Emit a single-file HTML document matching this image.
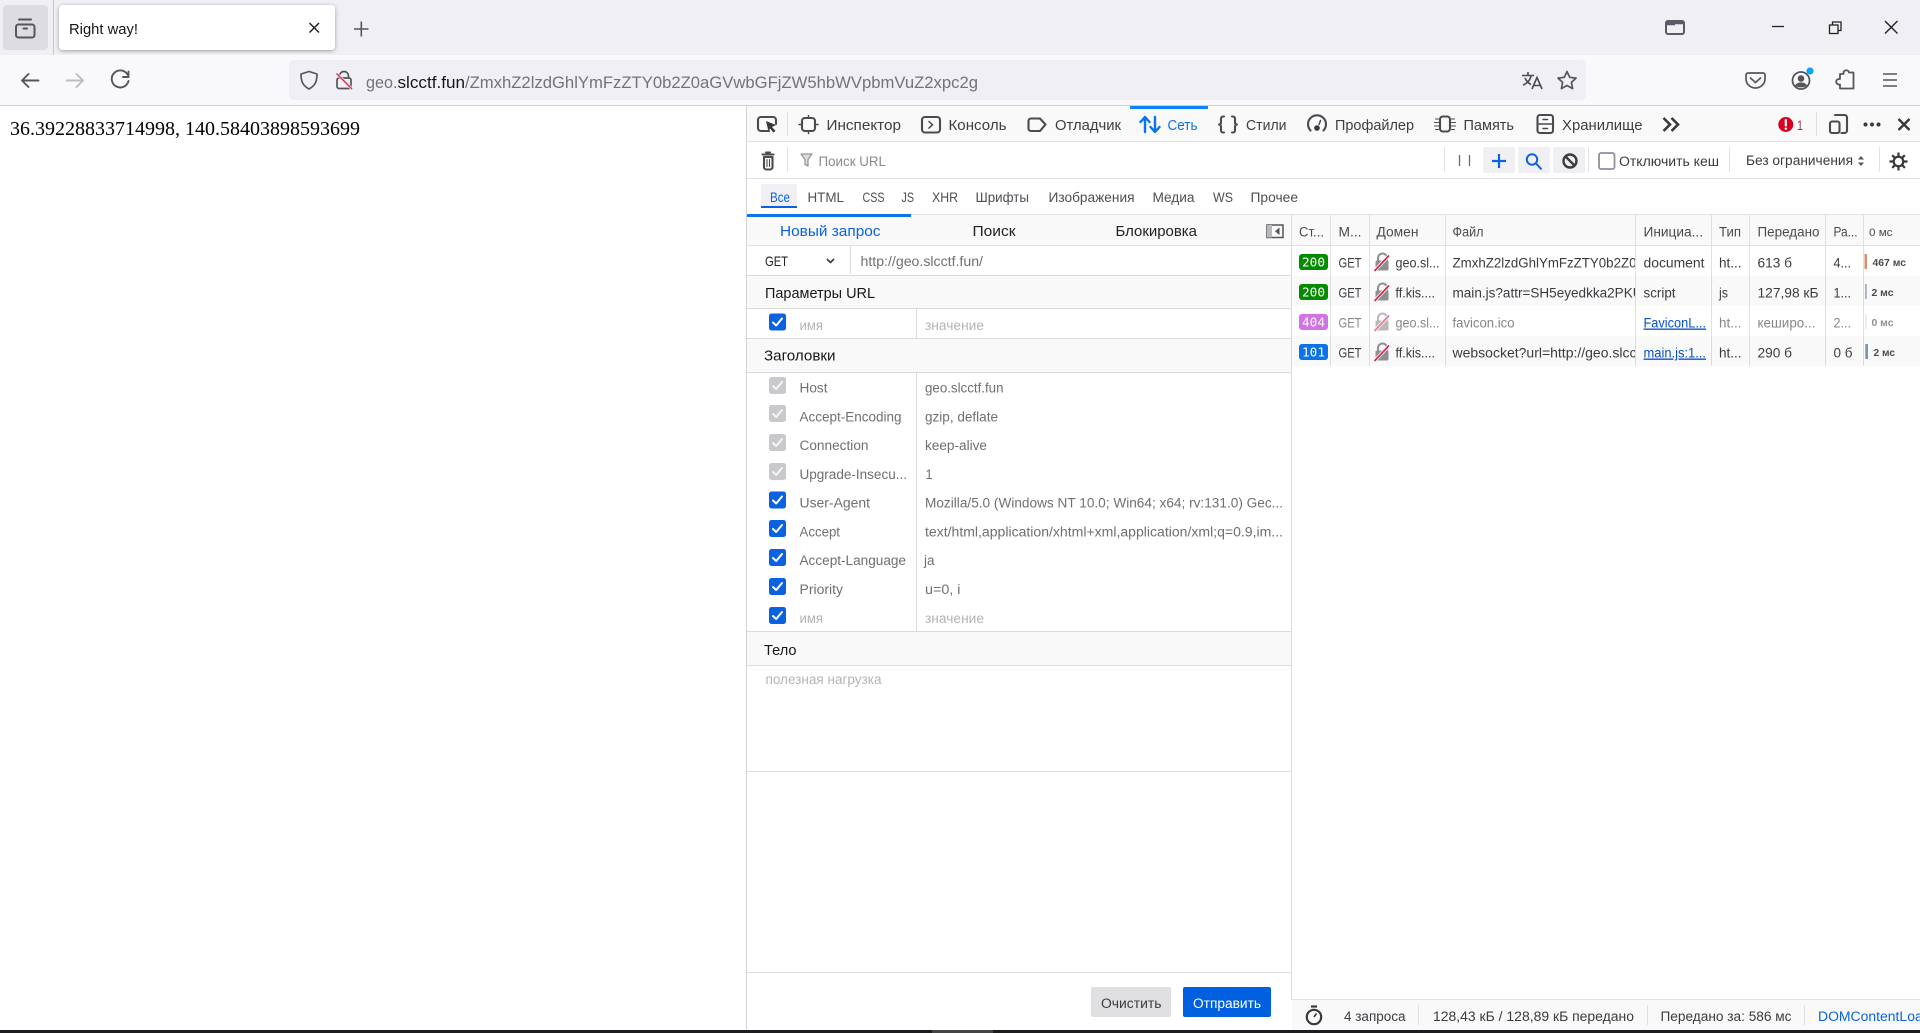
<!DOCTYPE html>
<html lang="ru"><head><meta charset="utf-8"><title>Right way!</title>
<style>
html,body{margin:0;padding:0;background:#fff;overflow:hidden;width:1920px;height:1033px}
svg{display:block}
text{font-family:"Liberation Sans",sans-serif;font-size:13.5px;fill:#3b3b40;white-space:pre}
.tb{font-size:14.500px;fill:#3e3e43}
.h{fill:#4a4a4f;font-size:13.500px}
.g{fill:#6f6f74}
.ph{fill:#b4b4b6}
.s{font-size:14.500px;fill:#18181a}
.st{font-family:"DejaVu Sans Mono",monospace;font-size:12.500px;fill:#fff}
.w{font-size:10.500px;font-weight:bold;fill:#4a4a4f}
.i{fill:none;stroke:#4a4a4f;stroke-width:2.100;stroke-linecap:round;stroke-linejoin:round}
.n{fill:none;stroke:#55555a;stroke-width:1.600;stroke-linecap:round;stroke-linejoin:round}
.l{stroke:#e1e1e3;stroke-width:1}
.lnk{fill:#0a50c8;text-decoration:underline}
</style></head><body>
<svg width="1920" height="1033" viewBox="0 0 1920 1033" xmlns="http://www.w3.org/2000/svg">
<defs>
<filter id="sh" x="-10%" y="-20%" width="120%" height="150%"><feDropShadow dx="0" dy="1" stdDeviation="2" flood-color="#000" flood-opacity=".35"/></filter>
<clipPath id="cf"><rect x="1450" y="246" width="185" height="120"/></clipPath>
<clipPath id="cb"><rect x="1291" y="1000" width="629" height="30"/></clipPath>
<g id="lock"><path d="M-4-2v-2.500a4.500 4.500 0 0 1 9 0V-2" fill="none" stroke="#8f8f91" stroke-width="2"/><rect x="-6.500" y="-2" width="13" height="10" rx="1.500" fill="#8f8f91"/><path d="M-8 9L7-7" stroke="#fff" stroke-width="3.400"/><path d="M-7.500 8.500L7-7" stroke="#d7264a" stroke-width="1.700"/></g>
<g id="cbon"><rect x="0" y="0" width="17" height="17" rx="2.500" fill="#0a62e0"/><path d="M4 9l3.200 3L13 5" fill="none" stroke="#fff" stroke-width="2" stroke-linecap="round" stroke-linejoin="round"/></g>
<g id="cboff"><rect x="0" y="0" width="17" height="17" rx="2.500" fill="#c9c9cd"/><path d="M4 9l3.200 3L13 5" fill="none" stroke="#f4f4f5" stroke-width="2" stroke-linecap="round" stroke-linejoin="round"/></g>
</defs>

<!-- tab strip -->
<rect width="1920" height="55" fill="#f0f0f4"/>
<rect x="3" y="5" width="45" height="45" rx="4" fill="#dcdce1"/>
<g class="n" style="stroke-width:2"><rect x="16" y="24.500" width="18.500" height="13" rx="2.500"/><path d="M19 19.500h12M23.500 28.500h3.500"/></g>
<path d="M53.500 0v55" stroke="#c8c8cc"/>
<rect x="59" y="5" width="276" height="45" rx="4" fill="#fff" filter="url(#sh)"/>
<text x="69" y="34" textLength="69" lengthAdjust="spacingAndGlyphs" style="font-size:15px;fill:#15141a">Right way!</text>
<path d="M309.500 23l9.500 9.500M319 23l-9.500 9.500" stroke="#222" stroke-width="1.500" fill="none"/>
<path d="M361.300 21.500v15M354 29h14.500" stroke="#55555a" stroke-width="1.600" fill="none"/>
<g fill="none" stroke="#5b5b66" stroke-width="2"><rect x="1666" y="21" width="18" height="13" rx="2"/><path d="M1666 23.500h9" stroke-width="3.500"/><path d="M1675 23h9" stroke-width="2.500"/></g>
<path d="M1772 26.500h12" stroke="#222" stroke-width="1.300"/>
<g fill="none" stroke="#222" stroke-width="1.300"><rect x="1829.500" y="25" width="8.500" height="8.500"/><path d="M1832.500 25v-3h8.500v8.500h-3"/></g>
<path d="M1885 21l12.500 12.500M1897.500 21l-12.500 12.500" stroke="#222" stroke-width="1.400" fill="none"/>

<!-- nav toolbar -->
<rect y="55" width="1920" height="50" fill="#f9f9fb"/>
<path d="M0 105.500h1920" stroke="#cfcfd2"/>
<g class="n" style="stroke-width:1.900"><path d="M22.500 80.500h16M28.500 74l-6.500 6.500 6.500 6.500"/></g>
<g class="n" style="stroke:#bdbdc1;stroke-width:1.900"><path d="M66.500 80.500h16M76.500 74l6.500 6.500-6.500 6.500"/></g>
<g class="n" style="stroke-width:1.900"><path d="M127.500 74.500a8.500 8.500 0 1 0 1 6.500"/><path d="M128.500 71.500v5.500h-5.500"/></g>
<rect x="289" y="60" width="1297" height="40" rx="5" fill="#f0f0f4"/>
<path d="M309 71.500l8 2.500c0 7-1.500 11.500-8 15-6.500-3.500-8-8-8-15z" fill="none" stroke="#55555a" stroke-width="1.700" stroke-linejoin="round"/>
<g fill="none" stroke="#55555a" stroke-width="1.700"><path d="M339.500 78v-2a4.500 4.500 0 0 1 9 0v2"/><rect x="337" y="78" width="14" height="10.500" rx="2"/></g>
<path d="M336.500 73.500L352 89" stroke="#f0f0f4" stroke-width="3"/><path d="M336.500 73.500L352 89" stroke="#e22850" stroke-width="1.400"/>
<text x="366" y="88" textLength="31.500" lengthAdjust="spacingAndGlyphs" style="font-size:17px;fill:#72727a">geo.</text>
<text x="397.500" y="88" textLength="67.500" lengthAdjust="spacingAndGlyphs" style="font-size:17px;fill:#15141a">slcctf.fun</text>
<text x="465" y="88" textLength="513" lengthAdjust="spacingAndGlyphs" style="font-size:17px;fill:#72727a">/ZmxhZ2lzdGhlYmFzZTY0b2Z0aGVwbGFjZW5hbWVpbmVuZ2xpc2g</text>
<g fill="none" stroke="#4a4a4f" stroke-width="1.600"><path d="M1522 75.500h12M1528 72v3.500M1531 75.500c-.5 4.500-4 8-8 9.500M1525 78c1 3 4 5.500 6 6.500M1532 89l5-11.500 5 11.500M1534 85.500h6.500"/></g>
<path d="M1567 71.500l2.700 5.800 6.300.8-4.600 4.300 1.200 6.200-5.600-3.100-5.600 3.100 1.200-6.200-4.600-4.300 6.300-.8z" fill="none" stroke="#55555a" stroke-width="1.700" stroke-linejoin="round"/>
<g fill="none" stroke="#55555a" stroke-width="1.700" stroke-linejoin="round"><path d="M1748 73h15a2 2 0 0 1 2 2v4c0 5-4.500 9-9.500 9s-9.500-4-9.500-9v-4a2 2 0 0 1 2-2z"/><path d="M1750.500 78l5 4.500 5-4.500" stroke-linecap="round"/></g>
<g><circle cx="1801" cy="80.500" r="8.500" fill="none" stroke="#55555a" stroke-width="1.800"/><circle cx="1801" cy="78.500" r="3.300" fill="#55555a"/><path d="M1795 85.500c1.500-2.500 3.500-3 6-3s4.500.5 6 3c-3 2.500-9 2.500-12 0z" fill="#55555a"/><circle cx="1810" cy="71" r="3.600" fill="#0aa5f5"/></g>
<path d="M1849 72.500a2.800 2.800 0 0 0-5.500 0v1.500h-3.500v5h-1.500a2.800 2.800 0 0 0 0 5.500h1.500v4h13.500v-16h-4.500z" fill="none" stroke="#55555a" stroke-width="1.800" stroke-linejoin="round"/>
<path d="M1883 74h14M1883 80h14M1883 86h14" stroke="#55555a" stroke-width="1.600" fill="none"/>

<!-- page -->
<text x="10" y="135" textLength="350" style="font-family:'Liberation Serif',serif;font-size:20px;fill:#000">36.39228833714998, 140.58403898593699</text>

<!-- devtools frame -->
<path d="M746.500 106v924" stroke="#d5d5d7"/>
<rect x="747" y="106" width="1173" height="35" fill="#f9f9fa"/>
<path d="M747 141.500h1173M747 178.500h1173M747 214.500h1173" class="l"/>
<rect x="1130" y="106" width="78" height="3" fill="#0a84ff"/>
<path d="M787.500 112v24M1816.500 112v24M787.500 147v25M1444.500 147v25M1588.500 147v25M1729.500 147v25M1879.500 147v25" class="l"/>

<!-- tool icons -->
<g class="i"><path d="M769 131h-8a3 3 0 0 1-3-3v-8a3 3 0 0 1 3-3h12a3 3 0 0 1 3 3v4"/></g>
<path d="M766 121l10 4-4 2 3.500 4-2 1.500-3.500-4-1.500 3z" fill="#38383d"/>
<g class="i"><rect x="802" y="118" width="13" height="13" rx="3"/><path d="M808.500 115.500v2.500M808.500 131v2.500M799 124.500h3M815 124.500h3" stroke-width="1.500"/></g>
<text x="826.500" y="130" textLength="74.500" lengthAdjust="spacingAndGlyphs" class="tb">Инспектор</text>
<g class="i"><rect x="922" y="117" width="18" height="15.500" rx="3"/><path d="M929 121.500l3.500 3.300-3.500 3.300" stroke-width="1.500"/></g>
<text x="948.500" y="130" textLength="58" lengthAdjust="spacingAndGlyphs" class="tb">Консоль</text>
<path d="M1031 118.500h9l5.500 6-5.500 6.500h-9a2.500 2.500 0 0 1-2.500-2.500v-7.500a2.500 2.500 0 0 1 2.500-2.500z" class="i"/>
<text x="1055" y="130" textLength="66" lengthAdjust="spacingAndGlyphs" class="tb">Отладчик</text>
<g fill="none" stroke="#0a74e8" stroke-width="2.400" stroke-linecap="round" stroke-linejoin="round"><path d="M1145 132v-15M1140.500 122l4.500-5 4.500 5M1155 117v15M1150.500 127l4.500 5 4.500-5"/></g>
<text x="1167.500" y="130" textLength="30" lengthAdjust="spacingAndGlyphs" class="tb" style="fill:#0a74e8">Сеть</text>
<g class="i"><path d="M1224 116.500h-1a2 2 0 0 0-2 2v3.500c0 1.500-.7 2.500-2 2.500 1.300 0 2 1 2 2.500v3.500a2 2 0 0 0 2 2h1M1232 116.500h1a2 2 0 0 1 2 2v3.500c0 1.500.7 2.500 2 2.500-1.300 0-2 1-2 2.500v3.500a2 2 0 0 1-2 2h-1"/></g>
<text x="1246" y="130" textLength="40.500" lengthAdjust="spacingAndGlyphs" class="tb">Стили</text>
<g class="i"><path d="M1310.500 130.500a9 9 0 1 1 13 0"/><path d="M1319 124.500l1.500-4" stroke-width="1.500"/></g><circle cx="1317" cy="128" r="2.800" fill="#38383d"/>
<text x="1335" y="130" textLength="79" lengthAdjust="spacingAndGlyphs" class="tb">Профайлер</text>
<g class="i"><rect x="1440" y="116.500" width="10" height="15" rx="3"/><path d="M1435.500 119h3M1434.500 122.500h4M1434.500 126h4M1435.500 129.500h3M1451.500 119h3M1451.500 122.500h4M1451.500 126h4M1451.500 129.500h3" stroke-width="1.100"/></g>
<text x="1463.500" y="130" textLength="50.500" lengthAdjust="spacingAndGlyphs" class="tb">Память</text>
<g class="i"><rect x="1537.500" y="115" width="15.500" height="18" rx="2.500"/><path d="M1537.500 124h15.500M1543 119.500h4.500M1543 128.500h4.500" stroke-width="1.500"/></g>
<text x="1562" y="130" textLength="80.500" lengthAdjust="spacingAndGlyphs" class="tb">Хранилище</text>
<path d="M1663.500 118l6.500 6.500-6.500 6.500M1671.500 118l6.500 6.500-6.500 6.500" fill="none" stroke="#38383d" stroke-width="2.600"/>
<circle cx="1785.800" cy="124.500" r="7.500" fill="#d70022"/><path d="M1785.800 120v5.500" stroke="#fff" stroke-width="2.200" stroke-linecap="round"/><circle cx="1785.800" cy="128.700" r="1.200" fill="#fff"/>
<text x="1797" y="130" textLength="6" lengthAdjust="spacingAndGlyphs" style="fill:#8a3a50">1</text>
<g class="i"><path d="M1835 115h9.500a2.500 2.500 0 0 1 2.500 2.500v13a2.500 2.500 0 0 1-2.500 2.500h-3"/><rect x="1830" y="121.500" width="9.500" height="11.500" rx="2"/></g>
<circle cx="1865.500" cy="124.500" r="2" fill="#38383d"/><circle cx="1872" cy="124.500" r="2" fill="#38383d"/><circle cx="1878.500" cy="124.500" r="2" fill="#38383d"/>
<path d="M1898.500 119l11 11M1909.500 119l-11 11" stroke="#38383d" stroke-width="2.400" fill="none"/>

<!-- filter bar -->
<g class="i"><path d="M762.500 154.500h11M766 152.500h4"/><path d="M764 157v10a2.500 2.500 0 0 0 2.500 2.500h3.500a2.500 2.500 0 0 0 2.500-2.500v-10z"/><path d="M767 159.500v7M769.500 159.500v7" stroke-width="1.100"/></g>
<path d="M801 154h11l-4 5.500v6.500l-3-1.500v-5z" fill="#dcdcde" stroke="#97979a" stroke-width="1.300" stroke-linejoin="round"/>
<text x="818.500" y="166" textLength="67.500" lengthAdjust="spacingAndGlyphs" style="fill:#8a8a8e;font-size:13.500px">Поиск URL</text>
<path d="M1459.500 155v11M1469.500 155v11" stroke="#6a6a6f" stroke-width="1.300"/>
<rect x="1483" y="147" width="32" height="26" rx="2" fill="#f0f0f4"/><rect x="1518" y="147" width="32" height="26" rx="2" fill="#f0f0f4"/><rect x="1553" y="147" width="32" height="26" rx="2" fill="#f0f0f4"/>
<path d="M1499 154v14M1492 161h14" stroke="#0a62e0" stroke-width="2.200" fill="none"/>
<g fill="none" stroke="#0a62e0" stroke-width="2"><circle cx="1532" cy="159.500" r="5.200"/><path d="M1536 163.500l5 5.300" stroke-linecap="round"/></g>
<g fill="none" stroke="#3b3b40" stroke-width="2.400"><circle cx="1570" cy="161" r="6.500"/><path d="M1565.500 156.500l9 9"/></g>
<rect x="1599" y="153" width="15.500" height="16" rx="2" fill="#fff" stroke="#8f8fa0" stroke-width="1.800"/>
<text x="1619" y="166" textLength="100" lengthAdjust="spacingAndGlyphs">Отключить кеш</text>
<text x="1746" y="165" textLength="107" lengthAdjust="spacingAndGlyphs">Без ограничения</text>
<path d="M1858 159.500l3-3.500 3 3.500zM1858 162.500l3 3.500 3-3.500z" fill="#55555a"/>
<g fill="none" stroke="#38383d" stroke-width="2.200"><circle cx="1898.500" cy="161.500" r="4.800"/><path d="M1898.500 152.500v3.500M1898.500 167v3.500M1889.500 161.500h3.500M1904 161.500h3.500M1892.200 155.200l2.500 2.500M1902.400 165.400l2.500 2.500M1904.800 155.200l-2.500 2.500M1894.700 165.400l-2.500 2.500"/></g>

<!-- type filters -->
<rect x="761" y="184" width="36" height="24" rx="2" fill="#f0f0f4"/>
<rect x="761" y="206" width="36" height="2" fill="#0a62e0"/>
<text x="770" y="202" textLength="20" lengthAdjust="spacingAndGlyphs" style="fill:#0a62e0">Все</text>
<text x="807.500" y="202" textLength="36.500" lengthAdjust="spacingAndGlyphs" style="fill:#4f4f55">HTML</text>
<text x="862.500" y="202" textLength="22" lengthAdjust="spacingAndGlyphs" style="fill:#4f4f55">CSS</text>
<text x="901.500" y="202" textLength="12.500" lengthAdjust="spacingAndGlyphs" style="fill:#4f4f55">JS</text>
<text x="932" y="202" textLength="26" lengthAdjust="spacingAndGlyphs" style="fill:#4f4f55">XHR</text>
<text x="975.500" y="202" textLength="53.500" lengthAdjust="spacingAndGlyphs" style="fill:#4f4f55">Шрифты</text>
<text x="1048.500" y="202" textLength="86" lengthAdjust="spacingAndGlyphs" style="fill:#4f4f55">Изображения</text>
<text x="1152.500" y="202" textLength="42" lengthAdjust="spacingAndGlyphs" style="fill:#4f4f55">Медиа</text>
<text x="1213" y="202" textLength="20" lengthAdjust="spacingAndGlyphs" style="fill:#4f4f55">WS</text>
<text x="1250.500" y="202" textLength="47.500" lengthAdjust="spacingAndGlyphs" style="fill:#4f4f55">Прочее</text>

<!-- panel tabs / table header bg -->
<rect x="747" y="215" width="1173" height="30" fill="#f9f9fa"/>
<path d="M747 245.500h1173" class="l"/>
<rect x="747" y="214" width="164" height="3" fill="#0a74e8"/>
<text x="780" y="236" textLength="100.500" lengthAdjust="spacingAndGlyphs" style="fill:#0a62e0;font-size:14.500px">Новый запрос</text>
<text x="972.500" y="236" textLength="43" lengthAdjust="spacingAndGlyphs" style="fill:#222;font-size:14.500px">Поиск</text>
<text x="1115.500" y="236" textLength="81.500" lengthAdjust="spacingAndGlyphs" style="fill:#222;font-size:14.500px">Блокировка</text>
<g><rect x="1267" y="225" width="16" height="12.500" fill="none" stroke="#55555a" stroke-width="1.500"/><rect x="1267" y="225" width="5" height="12.500" fill="#b8b8bc"/><path d="M1279.500 227.500l-4.500 3.800 4.500 3.800z" fill="#55555a"/></g>

<!-- left panel -->
<rect x="747" y="276" width="544" height="32" fill="#f9f9fa"/><rect x="747" y="339" width="544" height="33" fill="#f9f9fa"/><rect x="747" y="632" width="544" height="33" fill="#f9f9fa"/>
<path d="M1291.500 215v785M747 275.500h544M747 308.500h544M747 338.500h544M747 372.500h544M747 631.500h544M747 665.500h544M747 771.500h544M747 972.500h544" class="l" style="stroke:#dcdcde"/>
<path d="M850.500 245v29M916.500 309v29M916.500 373v258" class="l" style="stroke:#dcdcde"/>
<text x="765" y="266" textLength="23" lengthAdjust="spacingAndGlyphs" style="fill:#222;font-size:14px">GET</text>
<path d="M827 259l3.500 3.500 3.500-3.500" fill="none" stroke="#38383d" stroke-width="1.600"/>
<text x="860.500" y="266" textLength="122.500" lengthAdjust="spacingAndGlyphs" style="fill:#707074">http://geo.slcctf.fun/</text>
<text x="765" y="298" textLength="110" lengthAdjust="spacingAndGlyphs" class="s">Параметры URL</text>
<use href="#cbon" x="769" y="313.500"/>
<text x="799.500" y="330" textLength="23.500" lengthAdjust="spacingAndGlyphs" class="ph">имя</text>
<text x="925" y="330" textLength="59" lengthAdjust="spacingAndGlyphs" class="ph">значение</text>
<text x="764" y="360.500" textLength="71.500" lengthAdjust="spacingAndGlyphs" class="s">Заголовки</text>

<use href="#cboff" x="769" y="377"/>
<text x="799.500" y="392.500" textLength="28" lengthAdjust="spacingAndGlyphs" class="g">Host</text>
<text x="925" y="392.500" textLength="78.500" lengthAdjust="spacingAndGlyphs" class="g">geo.slcctf.fun</text>
<use href="#cboff" x="769" y="405"/>
<text x="799.500" y="421.500" textLength="102" lengthAdjust="spacingAndGlyphs" class="g">Accept-Encoding</text>
<text x="925" y="421.500" textLength="73" lengthAdjust="spacingAndGlyphs" class="g">gzip, deflate</text>
<use href="#cboff" x="769" y="434"/>
<text x="799.500" y="450" textLength="69" lengthAdjust="spacingAndGlyphs" class="g">Connection</text>
<text x="925" y="450" textLength="62" lengthAdjust="spacingAndGlyphs" class="g">keep-alive</text>
<use href="#cboff" x="769" y="463"/>
<text x="799.500" y="479" textLength="107.500" lengthAdjust="spacingAndGlyphs" class="g">Upgrade-Insecu...</text>
<text x="925.500" y="479" textLength="7" lengthAdjust="spacingAndGlyphs" class="g">1</text>
<use href="#cbon" x="769" y="491.500"/>
<text x="799.500" y="507.500" textLength="70.500" lengthAdjust="spacingAndGlyphs" class="g">User-Agent</text>
<text x="925" y="507.500" textLength="358" lengthAdjust="spacingAndGlyphs" class="g">Mozilla/5.0 (Windows NT 10.0; Win64; x64; rv:131.0) Gec...</text>
<use href="#cbon" x="769" y="520"/>
<text x="799.500" y="536.500" textLength="40.500" lengthAdjust="spacingAndGlyphs" class="g">Accept</text>
<text x="925" y="536.500" textLength="358" lengthAdjust="spacingAndGlyphs" class="g">text/html,application/xhtml+xml,application/xml;q=0.9,im...</text>
<use href="#cbon" x="769" y="549"/>
<text x="799.500" y="565" textLength="106.500" lengthAdjust="spacingAndGlyphs" class="g">Accept-Language</text>
<text x="924" y="565" textLength="10.500" lengthAdjust="spacingAndGlyphs" class="g">ja</text>
<use href="#cbon" x="769" y="578"/>
<text x="799.500" y="594" textLength="43.500" lengthAdjust="spacingAndGlyphs" class="g">Priority</text>
<text x="925" y="594" textLength="35.500" lengthAdjust="spacingAndGlyphs" class="g">u=0, i</text>
<use href="#cbon" x="769" y="607"/>
<text x="799.500" y="623" textLength="23.500" lengthAdjust="spacingAndGlyphs" class="ph">имя</text>
<text x="925" y="623" textLength="59" lengthAdjust="spacingAndGlyphs" class="ph">значение</text>
<text x="764" y="655" textLength="32.500" lengthAdjust="spacingAndGlyphs" class="s">Тело</text>
<text x="765.500" y="684" textLength="116" lengthAdjust="spacingAndGlyphs" class="ph">полезная нагрузка</text>
<rect x="1091" y="987" width="80" height="30" rx="2" fill="#e0e0e2"/>
<text x="1101" y="1008" textLength="60.500" lengthAdjust="spacingAndGlyphs">Очистить</text>
<rect x="1183" y="987" width="88" height="30" rx="2" fill="#0060df"/>
<text x="1193" y="1008" textLength="68" lengthAdjust="spacingAndGlyphs" style="fill:#fff">Отправить</text>

<!-- table -->
<path d="M1330.500 215v151M1369.500 215v151M1445.500 215v151M1635.500 215v151M1711.500 215v151M1749.500 215v151M1825.500 215v151M1863.500 215v151" class="l"/>
<text x="1299" y="236.500" textLength="25" lengthAdjust="spacingAndGlyphs" class="h">Ст...</text>
<text x="1338.500" y="236.500" textLength="23" lengthAdjust="spacingAndGlyphs" class="h">М...</text>
<text x="1376.500" y="236.500" textLength="42" lengthAdjust="spacingAndGlyphs" class="h">Домен</text>
<text x="1452.500" y="236.500" textLength="31" lengthAdjust="spacingAndGlyphs" class="h">Файл</text>
<text x="1643.500" y="236.500" textLength="59.500" lengthAdjust="spacingAndGlyphs" class="h">Инициа...</text>
<text x="1719" y="236.500" textLength="22" lengthAdjust="spacingAndGlyphs" class="h">Тип</text>
<text x="1757.500" y="236.500" textLength="62" lengthAdjust="spacingAndGlyphs" class="h">Передано</text>
<text x="1833.500" y="236.500" textLength="24" lengthAdjust="spacingAndGlyphs" class="h">Ра...</text>
<text x="1869" y="236" textLength="23.500" lengthAdjust="spacingAndGlyphs" class="h" style="font-size:11px">0 мс</text>
<rect x="1291.500" y="276" width="628.500" height="30" fill="#f9f9fa" style="mix-blend-mode:multiply"/>
<rect x="1291.500" y="336" width="628.500" height="30" fill="#f9f9fa" style="mix-blend-mode:multiply"/>

<!-- row 1 -->
<rect x="1299" y="254" width="29" height="16" rx="3" fill="#058b00"/><text x="1302" y="266.500" textLength="23" lengthAdjust="spacingAndGlyphs" class="st">200</text>
<text x="1338.500" y="267.500" textLength="23" lengthAdjust="spacingAndGlyphs" style="font-size:14px">GET</text>
<use href="#lock" x="1382" y="262.500"/>
<text x="1395.500" y="267.500" textLength="44" lengthAdjust="spacingAndGlyphs">geo.sl...</text>
<text x="1452.500" y="267.500" textLength="184" lengthAdjust="spacingAndGlyphs" clip-path="url(#cf)">ZmxhZ2lzdGhlYmFzZTY0b2Z0</text>
<text x="1643.500" y="267.500" textLength="61" lengthAdjust="spacingAndGlyphs">document</text>
<text x="1719" y="267.500" textLength="22.500" lengthAdjust="spacingAndGlyphs">ht...</text>
<text x="1757.500" y="267.500" textLength="34.500" lengthAdjust="spacingAndGlyphs">613 б</text>
<text x="1833.500" y="267.500" textLength="17.500" lengthAdjust="spacingAndGlyphs">4...</text>
<rect x="1864.500" y="254" width="2.500" height="15" fill="#d8916a"/>
<text x="1872.500" y="266" textLength="33.500" lengthAdjust="spacingAndGlyphs" class="w">467 мс</text>
<!-- row 2 -->
<rect x="1299" y="284" width="29" height="16" rx="3" fill="#058b00"/><text x="1302" y="296.500" textLength="23" lengthAdjust="spacingAndGlyphs" class="st">200</text>
<text x="1338.500" y="297.500" textLength="23" lengthAdjust="spacingAndGlyphs" style="font-size:14px">GET</text>
<use href="#lock" x="1382" y="292.500"/>
<text x="1395.500" y="297.500" textLength="39.500" lengthAdjust="spacingAndGlyphs">ff.kis....</text>
<text x="1452.500" y="297.500" textLength="190" lengthAdjust="spacingAndGlyphs" clip-path="url(#cf)">main.js?attr=SH5eyedkka2PKU</text>
<text x="1643.500" y="297.500" textLength="32" lengthAdjust="spacingAndGlyphs">script</text>
<text x="1719" y="297.500" textLength="9" lengthAdjust="spacingAndGlyphs">js</text>
<text x="1757.500" y="297.500" textLength="61" lengthAdjust="spacingAndGlyphs">127,98 кБ</text>
<text x="1833.500" y="297.500" textLength="17.500" lengthAdjust="spacingAndGlyphs">1...</text>
<rect x="1865.300" y="284" width="1.300" height="15" fill="#7d95b5"/>
<text x="1871.500" y="296" textLength="22" lengthAdjust="spacingAndGlyphs" class="w">2 мс</text>
<!-- row 3 -->
<g opacity=".62">
<rect x="1299" y="314" width="29" height="16" rx="3" fill="#b51fd6"/><text x="1302" y="326.500" textLength="23" lengthAdjust="spacingAndGlyphs" class="st">404</text>
<text x="1338.500" y="327.500" textLength="23" lengthAdjust="spacingAndGlyphs" style="font-size:14px">GET</text>
<use href="#lock" x="1382" y="322.500"/>
<text x="1395.500" y="327.500" textLength="44" lengthAdjust="spacingAndGlyphs">geo.sl...</text>
<text x="1452.500" y="327.500" textLength="62" lengthAdjust="spacingAndGlyphs">favicon.ico</text>
<text x="1719" y="327.500" textLength="22.500" lengthAdjust="spacingAndGlyphs">ht...</text>
<text x="1757.500" y="327.500" textLength="58" lengthAdjust="spacingAndGlyphs">кеширо...</text>
<text x="1833.500" y="327.500" textLength="17.500" lengthAdjust="spacingAndGlyphs">2...</text>
<rect x="1865.300" y="314" width="1.300" height="15" fill="#d5d5d8"/>
<text x="1871.500" y="326" textLength="22" lengthAdjust="spacingAndGlyphs" class="w">0 мс</text>
</g>
<text x="1643.500" y="327.500" textLength="62.500" lengthAdjust="spacingAndGlyphs" class="lnk">FaviconL...</text>
<!-- row 4 -->
<rect x="1299" y="344" width="29" height="16" rx="3" fill="#0a74e8"/><text x="1302" y="356.500" textLength="23" lengthAdjust="spacingAndGlyphs" class="st">101</text>
<text x="1338.500" y="357.500" textLength="23" lengthAdjust="spacingAndGlyphs" style="font-size:14px">GET</text>
<use href="#lock" x="1382" y="352.500"/>
<text x="1395.500" y="357.500" textLength="39.500" lengthAdjust="spacingAndGlyphs">ff.kis....</text>
<text x="1452.500" y="357.500" textLength="184" lengthAdjust="spacingAndGlyphs" clip-path="url(#cf)">websocket?url=http://geo.slcc</text>
<text x="1643.500" y="357.500" textLength="62.500" lengthAdjust="spacingAndGlyphs" class="lnk">main.js:1...</text>
<text x="1719" y="357.500" textLength="22.500" lengthAdjust="spacingAndGlyphs">ht...</text>
<text x="1757.500" y="357.500" textLength="34.500" lengthAdjust="spacingAndGlyphs">290 б</text>
<text x="1833.500" y="357.500" textLength="19" lengthAdjust="spacingAndGlyphs">0 б</text>
<rect x="1865.300" y="344" width="2.700" height="15" fill="#7d95b5"/>
<text x="1873.500" y="356" textLength="21.500" lengthAdjust="spacingAndGlyphs" class="w">2 мс</text>

<!-- status bar -->
<rect x="1292" y="1000" width="628" height="30" fill="#f9f9fa"/>
<path d="M1292 999.500h628" class="l"/>
<g fill="none" stroke="#38383d" stroke-width="2.200"><circle cx="1314" cy="1017" r="7.200"/><path d="M1311 1006.500h6"/><path d="M1314 1017l2.500-3.500" stroke-width="1.600"/></g>
<text x="1344" y="1021" textLength="61.500" lengthAdjust="spacingAndGlyphs">4 запроса</text>
<path d="M1418.500 1005v20M1647.500 1005v20M1804.500 1005v20" class="l"/>
<text x="1433" y="1021" textLength="201" lengthAdjust="spacingAndGlyphs">128,43 кБ / 128,89 кБ передано</text>
<text x="1660.500" y="1021" textLength="131" lengthAdjust="spacingAndGlyphs">Передано за: 586 мс</text>
<text x="1818" y="1021" textLength="128" lengthAdjust="spacingAndGlyphs" clip-path="url(#cb)" style="fill:#0a62e0">DOMContentLoaded</text>

<!-- bottom strip -->
<rect y="1030" width="1920" height="3" fill="#1c1c1e"/>
<rect x="932" y="1030" width="61" height="3" fill="#444"/>
</svg>
</body></html>
